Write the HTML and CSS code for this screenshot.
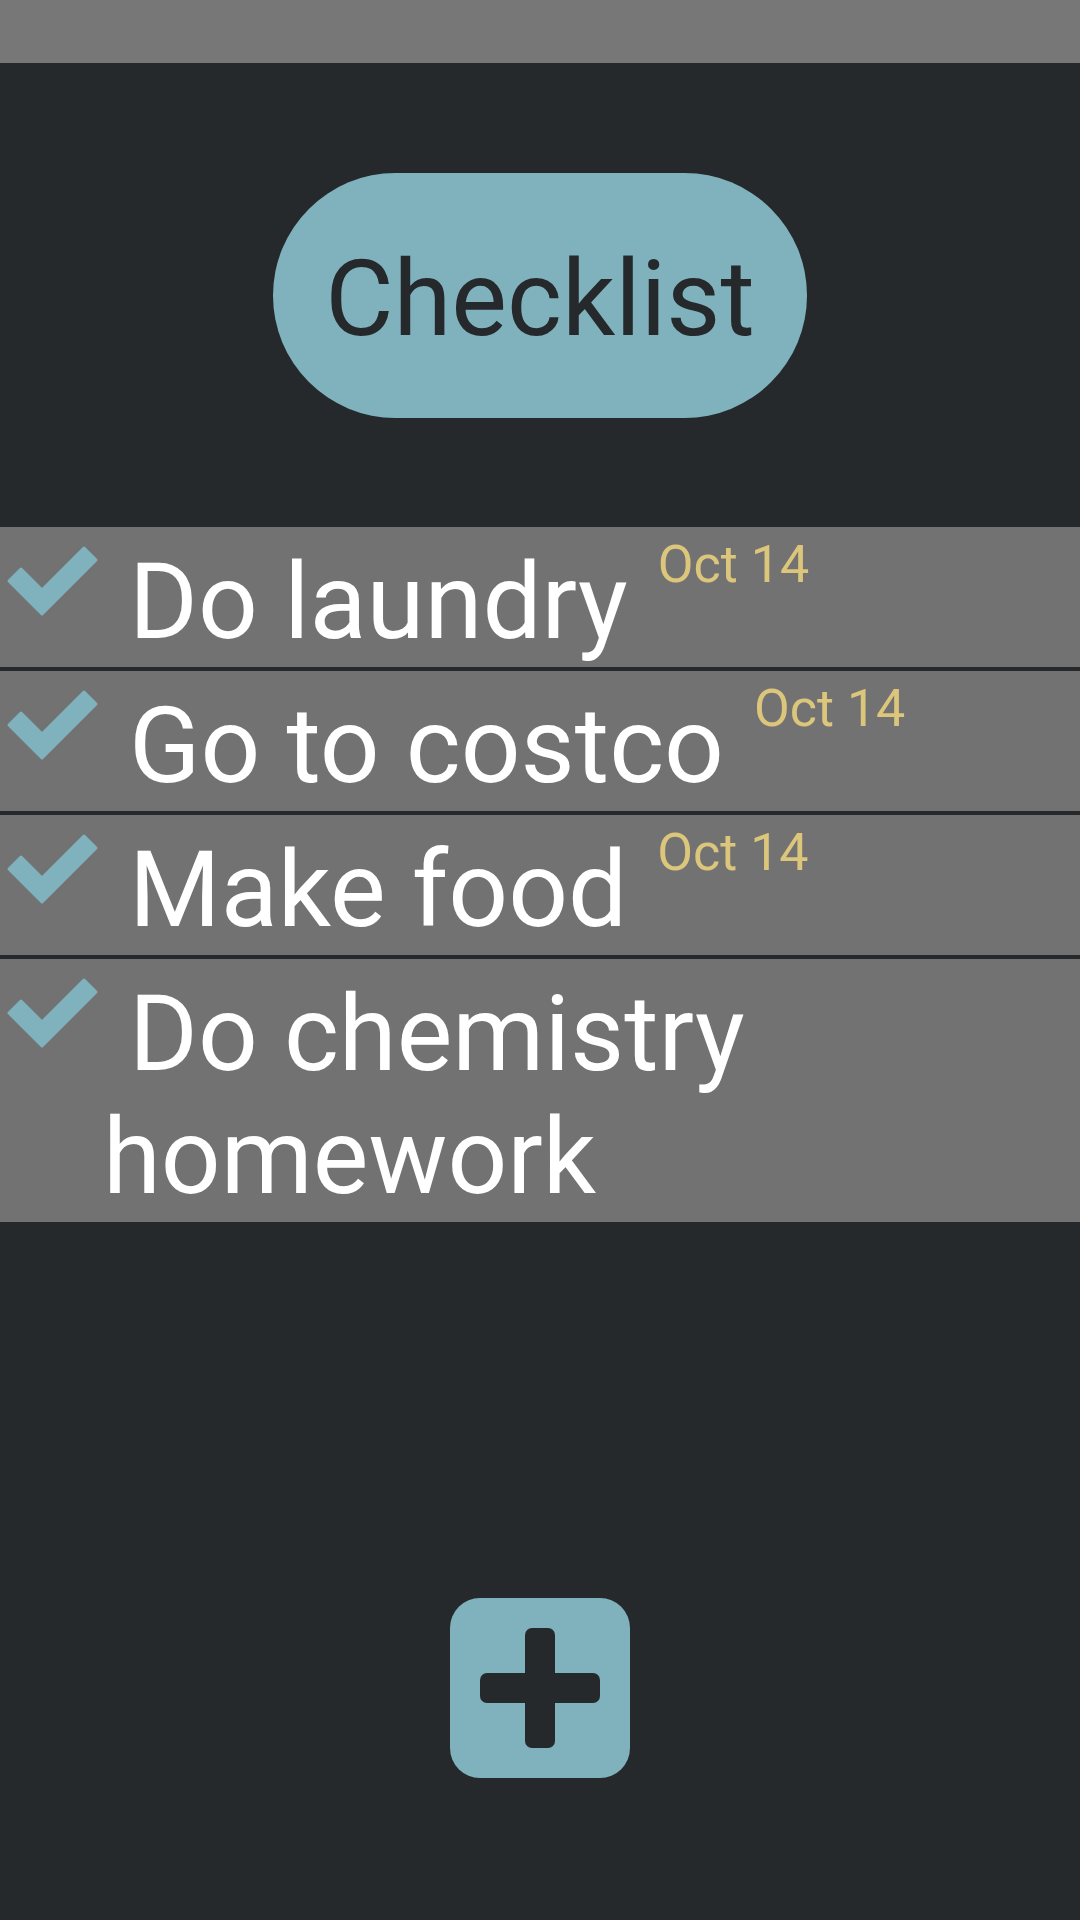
FILE: index.html
```html
<!DOCTYPE html>
<html>
<head>
<meta charset="utf-8">
<link rel="stylesheet" href="styles.css">
</head>
<body>
<div class="app">
  <div class="topbar"></div>
  <div class="header">
    <div class="title-pill">Checklist</div>
  </div>
  <div class="list">
    <div class="row">
      <svg class="check" width="103" height="100" viewBox="0 0 103 100"><polygon points="9,54 42,87 96,33 84,21 42,63 21,42"/></svg>
      <div class="task">&nbsp;Do laundry</div>
      <div class="date">Oct 14</div>
    </div>
    <div class="row">
      <svg class="check" width="103" height="100" viewBox="0 0 103 100"><polygon points="9,54 42,87 96,33 84,21 42,63 21,42"/></svg>
      <div class="task">&nbsp;Go to costco</div>
      <div class="date">Oct 14</div>
    </div>
    <div class="row">
      <svg class="check" width="103" height="100" viewBox="0 0 103 100"><polygon points="9,54 42,87 96,33 84,21 42,63 21,42"/></svg>
      <div class="task">&nbsp;Make food</div>
      <div class="date">Oct 14</div>
    </div>
    <div class="row">
      <svg class="check" width="103" height="100" viewBox="0 0 103 100"><polygon points="9,54 42,87 96,33 84,21 42,63 21,42"/></svg>
      <div class="task">&nbsp;Do chemistry homework</div>
    </div>
  </div>
  <div class="spacer"></div>
  <div class="footer">
    <button class="add-btn" aria-label="Add">
      <svg width="180" height="180" viewBox="0 0 180 180">
        <rect x="75" y="30" width="30" height="120" rx="7"/>
        <rect x="30" y="75" width="120" height="30" rx="7"/>
      </svg>
    </button>
  </div>
</div>
</body>
</html>
```
FILE: styles.css
```css
html, body {
  margin: 0;
  padding: 0;
}
body {
  background: #25292c;
  font-family: Roboto, "Liberation Sans", sans-serif;
}
.app {
  width: 1080px;
  height: 1920px;
  display: flex;
  flex-direction: column;
  background: #25292c;
}
.topbar {
  height: 63px;
  background: #777777;
  flex: none;
}
.header {
  display: flex;
  justify-content: center;
  padding: 110px 0 109px;
}
.title-pill {
  width: 534px;
  height: 245px;
  border-radius: 9999px;
  background: #80b2bd;
  color: #25292c;
  font-size: 105px;
  line-height: 245px;
  text-align: center;
  padding-top: 4px;
  box-sizing: border-box;
}
.list {
  display: flex;
  flex-direction: column;
  gap: 4px;
}
.row {
  background: #727272;
  display: flex;
  align-items: flex-start;
  padding-bottom: 3px;
}
.check {
  flex: none;
  fill: #80b2bd;
  stroke: #80b2bd;
  stroke-width: 3;
  stroke-linejoin: round;
}
.task {
  color: #ffffff;
  font-size: 105px;
  line-height: 123px;
  padding-top: 14px;
  min-width: 0;
}
.date {
  flex: none;
  color: #dcc67c;
  font-size: 52px;
  line-height: 61px;
  margin-top: 7px;
  margin-left: 30px;
}
.spacer {
  flex: 1;
}
.footer {
  display: flex;
  justify-content: center;
  padding-bottom: 142px;
}
.add-btn {
  width: 180px;
  height: 180px;
  border: none;
  padding: 0;
  border-radius: 30px;
  background: #80b2bd;
  display: block;
}
.add-btn svg {
  display: block;
  fill: #25292c;
}
```
